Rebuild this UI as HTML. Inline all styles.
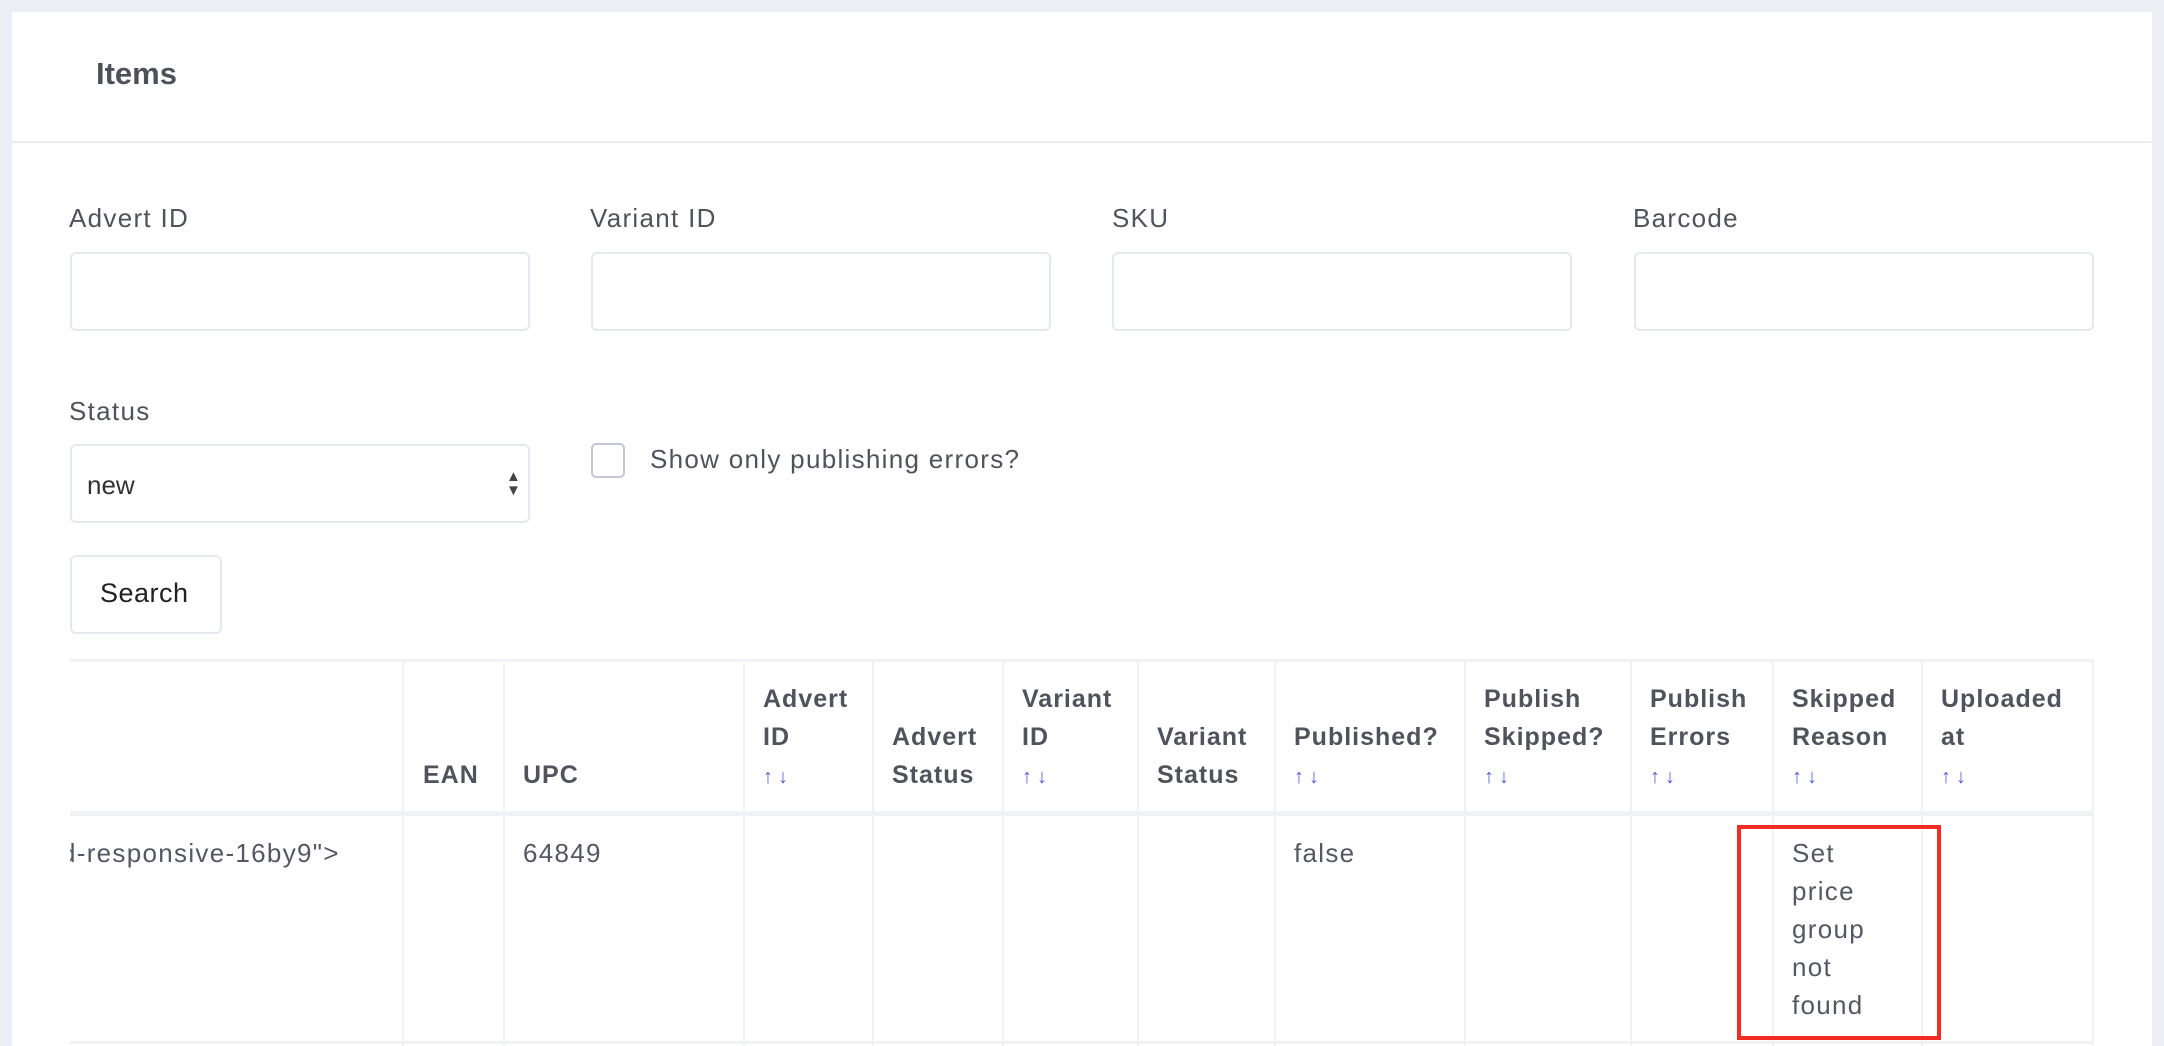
<!DOCTYPE html>
<html style="overflow:hidden;height:1046px"><head><meta charset="utf-8"><style>
*{box-sizing:border-box;margin:0;padding:0}
body{width:2164px;height:1046px;background:#eceef4;position:relative;overflow:hidden;font-family:"Liberation Sans",sans-serif;color:#50525c}
.card{position:absolute;left:12px;top:12px;width:2140px;height:1034px;background:#fff}
.hdr{position:absolute;left:0;top:0;width:2140px;height:131px;border-bottom:2px solid #ebedf2}
.a{position:absolute}
.lbl{font-size:26px;letter-spacing:1.3px;color:#50525c}
.inp{position:absolute;height:79px;width:460px;border:2px solid #e6e8ef;border-radius:6px;background:#fff}
.th{position:absolute;font-size:25px;font-weight:bold;letter-spacing:1px;color:#50525c;line-height:38px}
.arr{color:#5560d8;font-size:20px;font-weight:bold;letter-spacing:5px}
.vl{position:absolute;top:661px;width:2px;height:385px;background:#f1f2f6}
.td{position:absolute;font-size:26px;letter-spacing:1.3px;color:#555762;line-height:38px;top:834px}
</style></head><body>
<div class="card"><div class="hdr"></div></div>
<div class="a" style="left:96px;top:56px;font-size:31px;font-weight:bold;color:#4e505a">Items</div>

<div class="a lbl" style="left:69px;top:203px">Advert ID</div>
<div class="a lbl" style="left:590px;top:203px">Variant ID</div>
<div class="a lbl" style="left:1112px;top:203px">SKU</div>
<div class="a lbl" style="left:1633px;top:203px">Barcode</div>
<div class="inp" style="left:70px;top:252px"></div>
<div class="inp" style="left:591px;top:252px"></div>
<div class="inp" style="left:1112px;top:252px"></div>
<div class="inp" style="left:1634px;top:252px"></div>

<div class="a lbl" style="left:69px;top:396px">Status</div>
<div class="inp" style="left:70px;top:444px"></div>
<div class="a" style="left:87px;top:470px;font-size:26px;color:#333">new</div>
<div class="a" style="left:506px;top:470px;font-size:15px;line-height:14px;color:#444">▲<br>▼</div>
<div class="a" style="left:591px;top:443px;width:34px;height:35px;border:2px solid #c4c8d6;border-radius:5px"></div>
<div class="a lbl" style="left:650px;top:444px">Show only publishing errors?</div>
<div class="a" style="left:70px;top:555px;width:152px;height:79px;border:2px solid #e6e8ef;border-radius:6px"></div>
<div class="a" style="left:100px;top:578px;font-size:27px;letter-spacing:0.5px;color:#222">Search</div>

<div class="a" style="left:70px;top:659px;width:2024px;height:3px;background:#f1f2f6"></div>
<div class="a" style="left:70px;top:811px;width:2024px;height:5px;background:#f1f2f6"></div>
<div class="a" style="left:70px;top:1041px;width:2024px;height:3px;background:#f1f2f6"></div>
<div class="vl" style="left:402px"></div><div class="vl" style="left:503px"></div>
<div class="vl" style="left:743px"></div><div class="vl" style="left:872px"></div>
<div class="vl" style="left:1002px"></div><div class="vl" style="left:1137px"></div>
<div class="vl" style="left:1274px"></div><div class="vl" style="left:1464px"></div>
<div class="vl" style="left:1630px"></div><div class="vl" style="left:1772px"></div>
<div class="vl" style="left:1921px"></div><div class="vl" style="left:2092px"></div>

<div class="th" style="left:423px;top:756px">EAN</div>
<div class="th" style="left:523px;top:756px">UPC</div>
<div class="th" style="left:763px;top:680px">Advert<br>ID<br><span class="arr">↑↓</span></div>
<div class="th" style="left:892px;top:718px">Advert<br>Status</div>
<div class="th" style="left:1022px;top:680px">Variant<br>ID<br><span class="arr">↑↓</span></div>
<div class="th" style="left:1157px;top:718px">Variant<br>Status</div>
<div class="th" style="left:1294px;top:718px">Published?<br><span class="arr">↑↓</span></div>
<div class="th" style="left:1484px;top:680px">Publish<br>Skipped?<br><span class="arr">↑↓</span></div>
<div class="th" style="left:1650px;top:680px">Publish<br>Errors<br><span class="arr">↑↓</span></div>
<div class="th" style="left:1792px;top:680px">Skipped<br>Reason<br><span class="arr">↑↓</span></div>
<div class="th" style="left:1941px;top:680px">Uploaded<br>at<br><span class="arr">↑↓</span></div>

<div class="a" style="left:70px;top:820px;width:330px;height:60px;overflow:hidden"><div class="td" style="left:-9px;top:14px;white-space:nowrap">d-responsive-16by9"&gt;</div></div>
<div class="td" style="left:523px">64849</div>
<div class="td" style="left:1294px">false</div>
<div class="td" style="left:1792px">Set<br>price<br>group<br>not<br>found</div>
<div class="a" style="left:1737px;top:825px;width:204px;height:215px;border:4px solid #f22c22"></div>
</body></html>
